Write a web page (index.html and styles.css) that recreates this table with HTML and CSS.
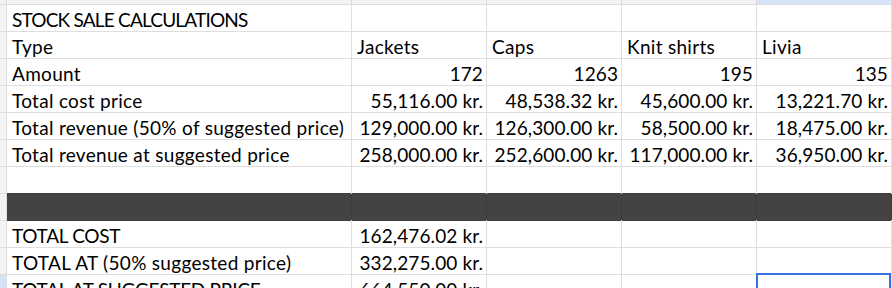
FILE: index.html
```html
<!DOCTYPE html>
<html>
<head>
<meta charset="utf-8">
<link rel="stylesheet" href="styles.css">
</head>
<body>
<div class="sheet">
  <div class="row colhead">
    <div class="corner"></div><div class="ch"></div><div class="ch"></div><div class="ch"></div><div class="ch"></div><div class="ch sel"></div>
  </div>
  <div class="row">
    <div class="rh"></div><div class="c caps">STOCK SALE CALCULATIONS</div><div class="c"></div><div class="c"></div><div class="c"></div><div class="c"></div>
  </div>
  <div class="row">
    <div class="rh"></div><div class="c">Type</div><div class="c">Jackets</div><div class="c">Caps</div><div class="c">Knit shirts</div><div class="c">Livia</div>
  </div>
  <div class="row">
    <div class="rh"></div><div class="c">Amount</div><div class="c n">172</div><div class="c n">1263</div><div class="c n">195</div><div class="c n">135</div>
  </div>
  <div class="row">
    <div class="rh"></div><div class="c">Total cost price</div><div class="c n">55,116.00 kr.</div><div class="c n">48,538.32 kr.</div><div class="c n">45,600.00 kr.</div><div class="c n">13,221.70 kr.</div>
  </div>
  <div class="row">
    <div class="rh"></div><div class="c">Total revenue (50% of suggested price)</div><div class="c n">129,000.00 kr.</div><div class="c n">126,300.00 kr.</div><div class="c n">58,500.00 kr.</div><div class="c n">18,475.00 kr.</div>
  </div>
  <div class="row">
    <div class="rh"></div><div class="c">Total revenue at suggested price</div><div class="c n">258,000.00 kr.</div><div class="c n">252,600.00 kr.</div><div class="c n">117,000.00 kr.</div><div class="c n">36,950.00 kr.</div>
  </div>
  <div class="row">
    <div class="rh"></div><div class="c"></div><div class="c"></div><div class="c"></div><div class="c"></div><div class="c"></div>
  </div>
  <div class="row band">
    <div class="rh"></div><div class="c dark"></div><div class="c dark"></div><div class="c dark"></div><div class="c dark"></div><div class="c dark"></div>
  </div>
  <div class="row">
    <div class="rh"></div><div class="c caps2">TOTAL COST</div><div class="c n">162,476.02 kr.</div><div class="c"></div><div class="c"></div><div class="c"></div>
  </div>
  <div class="row">
    <div class="rh"></div><div class="c">TOTAL AT (50% suggested price)</div><div class="c n">332,275.00 kr.</div><div class="c"></div><div class="c"></div><div class="c"></div>
  </div>
  <div class="row">
    <div class="rh sel"></div><div class="c caps2">TOTAL AT SUGGESTED PRICE</div><div class="c n">664,550.00 kr.</div><div class="c"></div><div class="c"></div><div class="c active"></div>
  </div>
</div>
</body>
</html>
```
FILE: styles.css
```css
html, body {
  margin: 0;
  padding: 0;
  background: #ffffff;
  overflow: hidden;
}

.sheet {
  width: 892px;
  height: 288px;
  overflow: hidden;
  display: flex;
  flex-direction: column;
  gap: 1px;
  background: #dedede;
  font-family: "Lato", "Liberation Sans", sans-serif;
  font-size: 19px;
  letter-spacing: 0.3px;
  color: #000000;
}

.row {
  display: grid;
  grid-template-columns: 6px 344px 134px 134px 134px 134px;
  gap: 1px;
  height: 26px;
  flex: 0 0 auto;
}

.colhead {
  height: 4px;
}

.corner, .ch, .rh {
  background: #f3f3f3;
}

.ch.sel, .rh.sel {
  background: #d6e2f6;
}

.c {
  background: #ffffff;
  display: flex;
  align-items: flex-end;
  justify-content: flex-start;
  padding: 0 3px 2px 5px;
  line-height: 19px;
  white-space: nowrap;
  overflow: visible;
  position: relative;
}

.caps {
  letter-spacing: -0.8px;
}

.caps2 {
  letter-spacing: -0.3px;
}

.n {
  justify-content: flex-end;
  padding-left: 2px;
  letter-spacing: 0.1px;
}

.dark {
  background: #434343;
  box-shadow: 0 -1px 0 #3f3f3f, 0 1px 0 #3f3f3f, 1px 0 0 #3d3d3d;
}

.active {
  position: relative;
}

.active::after {
  content: "";
  position: absolute;
  left: -1px;
  top: -2px;
  width: 131px;
  height: 30px;
  border: 2px solid #3572de;
}
```
